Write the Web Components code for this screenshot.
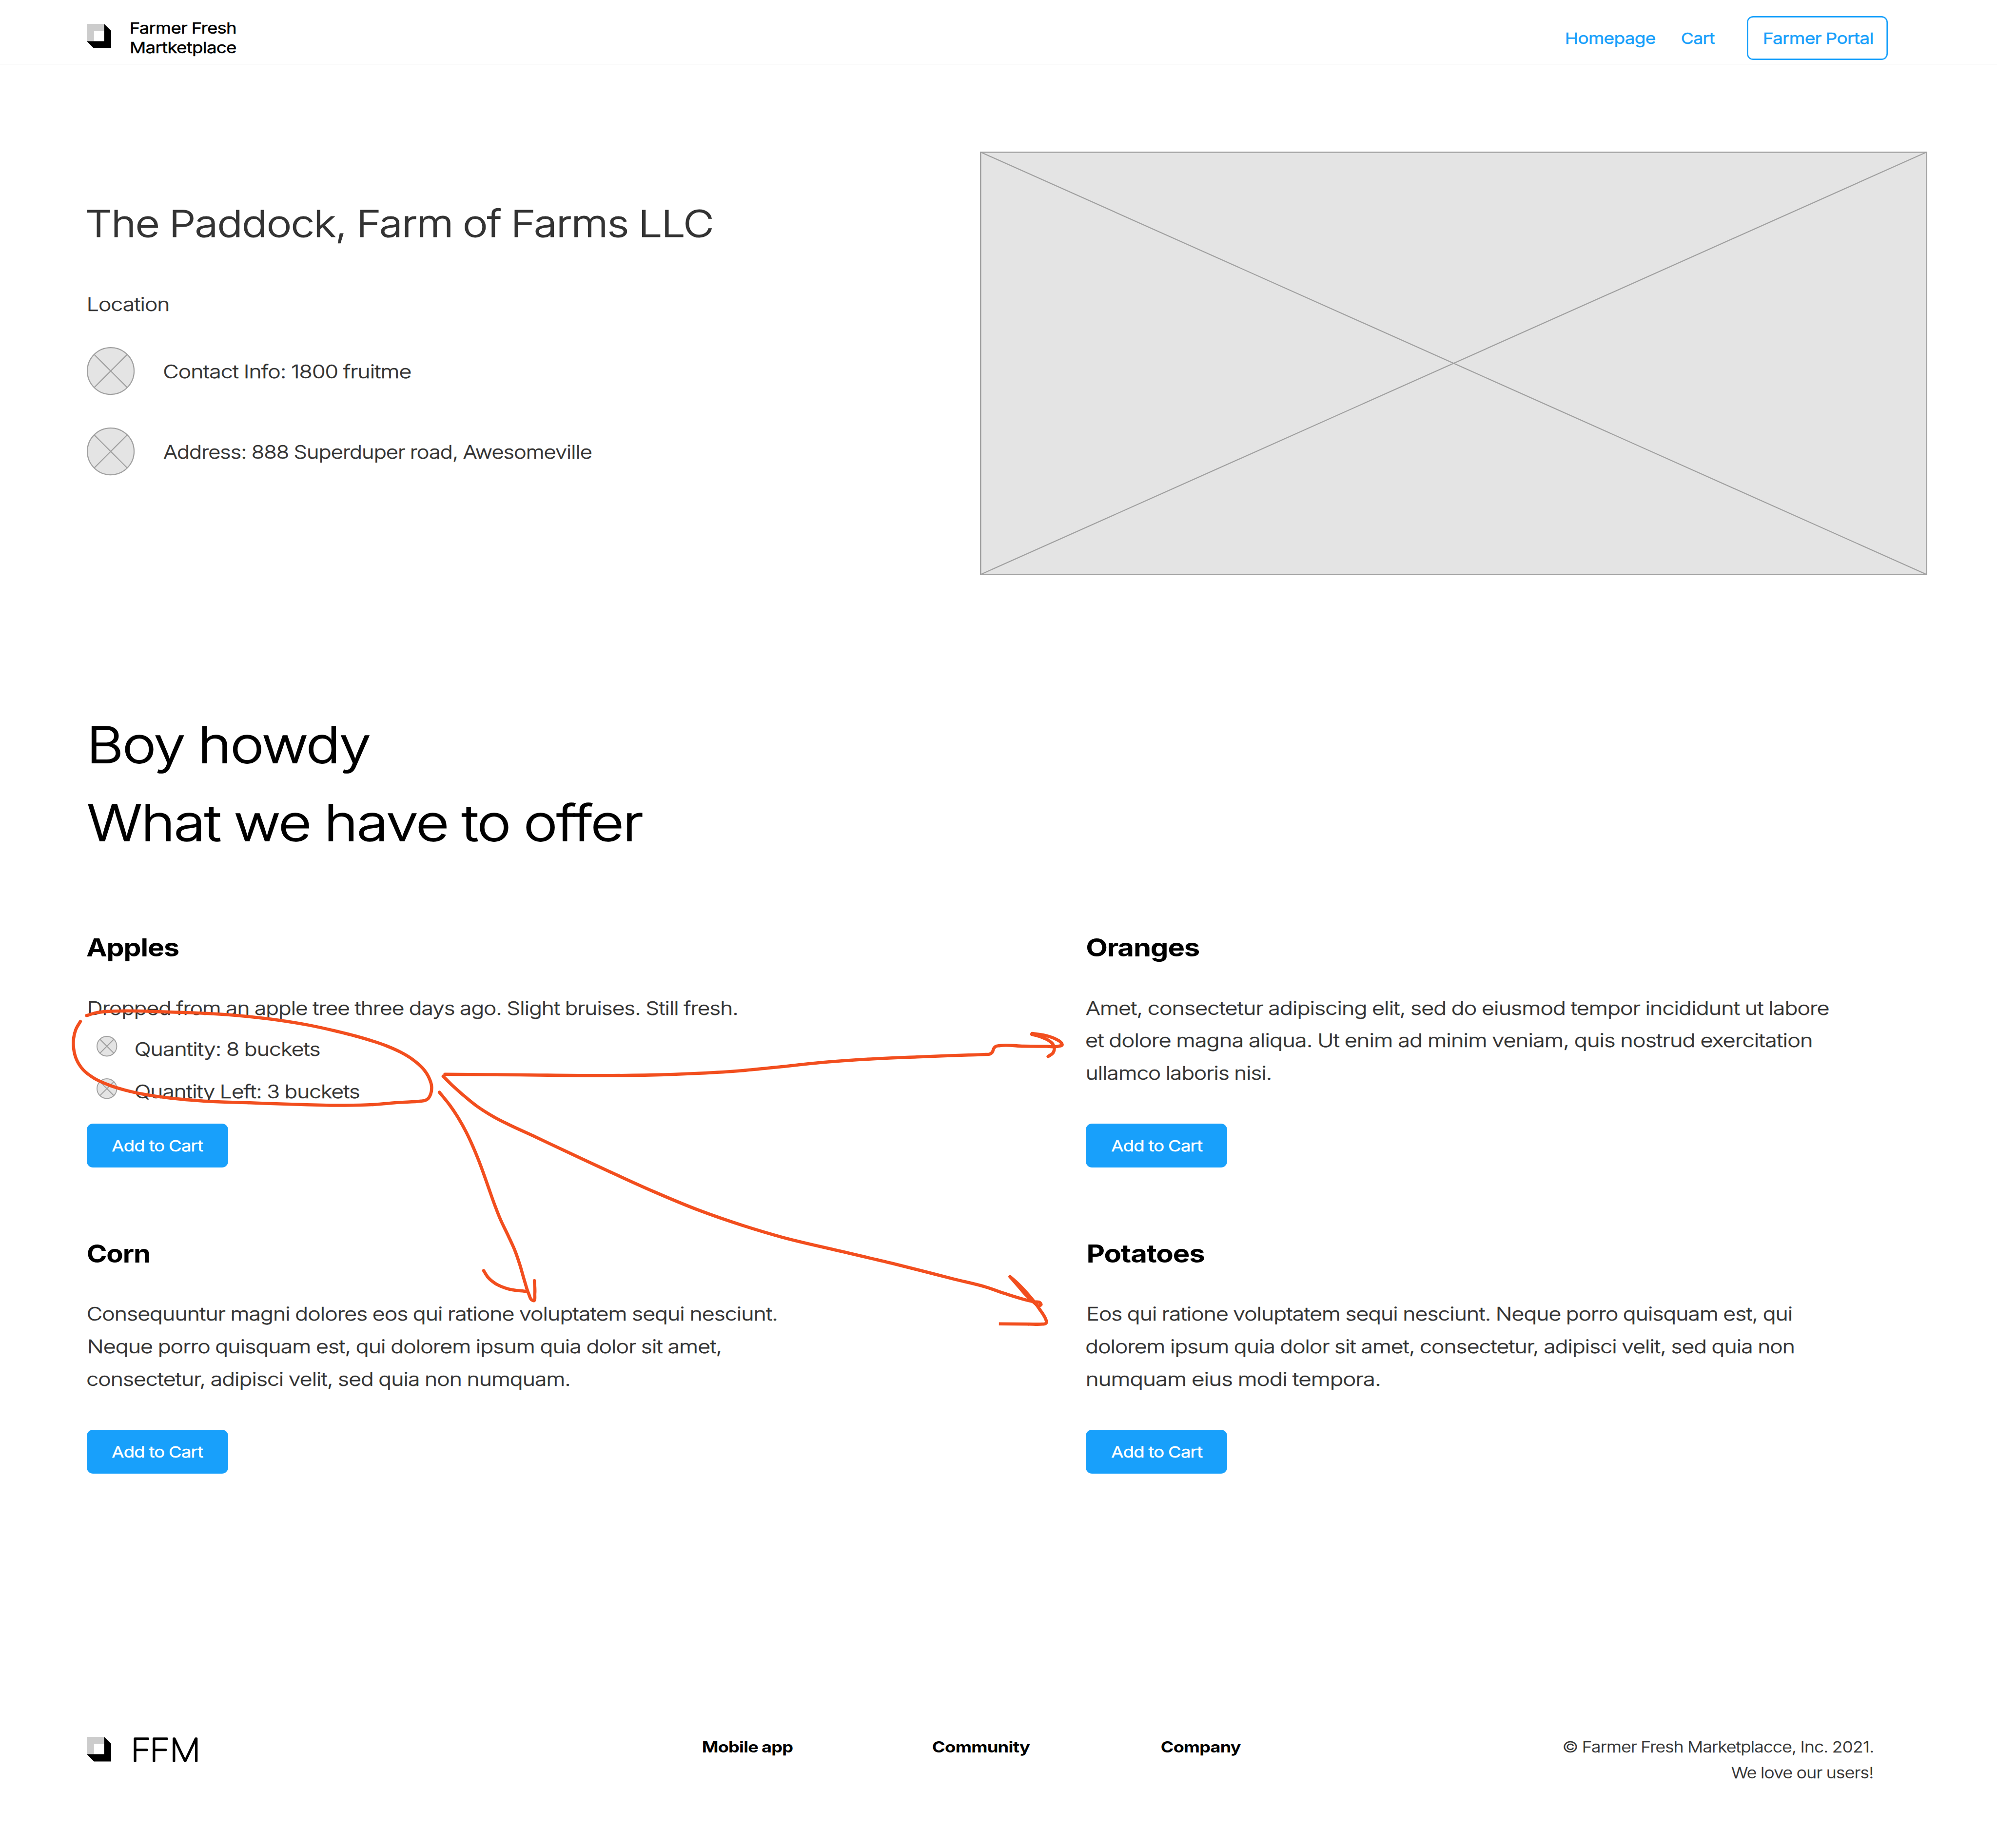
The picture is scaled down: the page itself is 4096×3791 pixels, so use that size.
<!DOCTYPE html>
<html lang="en">
<head>
<meta charset="utf-8">
<title>Farmer Fresh Marketplace</title>
<style>
/* 1rem = 10 design units; the design is 5112 units wide */
html{font-size:calc(100vw / 511.2)}
body{margin:0;background:#fff;font-family:Inter,"Open Sans",sans-serif;color:#333;overflow:hidden;font-weight:300;--ink:.014em}
</style>
</head>
<body>
<farm-page></farm-page>
<script>
const define=(name,html,setup)=>{
  const t=document.createElement('template');t.innerHTML=html;
  customElements.define(name,class extends HTMLElement{
    constructor(){super();this.attachShadow({mode:'open'}).append(t.content.cloneNode(true))}
    connectedCallback(){setup&&setup(this,this.shadowRoot)}
  });
};

define('cube-logo',`<style>:host{display:block;width:6.3rem;height:6.3rem;flex:none}svg{display:block;width:100%;height:100%}</style>
<svg viewBox="0 0 63 63"><path fill="#ccc" d="M0 0H44.4V18.5H18.5V44.3H0Z"/><path d="M44.4 0L63 18.5V63H18.5L0 44.3H44.4Z"/></svg>`);

define('round-mark',`<style>:host{display:block;width:var(--d,12.25rem);height:var(--d,12.25rem);flex:none}svg{display:block;width:100%;height:100%;overflow:visible}</style>
<svg viewBox="0 0 122 122"><g fill="#e4e4e4" stroke="#a0a0a0"><circle cx="61" cy="61"/><path d="M18.6 18.6L103.4 103.4M103.4 18.6L18.6 103.4"/></g></svg>`,
(el,r)=>{const s=el.hasAttribute('small');r.querySelector('g').setAttribute('stroke-width',s?5.6:2.8);
  r.querySelector('circle').setAttribute('r',s?58.2:59.6)});

define('image-box',`<style>:host{display:block;width:242.5rem;height:108.4rem;flex:none}svg{display:block;width:100%;height:100%}</style>
<svg viewBox="0 0 2425 1084"><rect x="1.6" y="1.6" width="2421.8" height="1080.8" fill="#e4e4e4" stroke="#a0a0a0" stroke-width="3.2"/><path d="M1 1L2424 1083M2424 1L1 1083" stroke="#a0a0a0" stroke-width="2.8"/></svg>`);

define('site-header',`<style>
:host{display:flex;align-items:flex-start;box-sizing:border-box;height:16.6rem;padding:0 27.9rem 0 22.2rem;border-bottom:1px solid #fafafa}
cube-logo{margin-top:6.1rem}
.brand{margin:4.63rem 0 0 4.9rem;color:#000;font-size:3.94rem;line-height:5.02rem;font-weight:400}
nav{display:flex;align-items:center;margin:4.13rem 0 0 auto;color:#18a0fb;font-size:3.94rem;line-height:6rem;font-weight:400}
.cart{margin:0 8.2rem 0 6.8rem}
.portal{display:flex;align-items:center;box-sizing:border-box;width:36.1rem;height:11.17rem;padding-left:4.34rem;border-radius:1.6rem;box-shadow:inset 0 0 0 .33rem #18a0fb}
</style>
<cube-logo></cube-logo>
<div class="brand"><fit-text w="269.3">Farmer Fresh</fit-text><fit-text w="269" o=".5">Martketplace</fit-text></div>
<nav><fit-text w="228">Homepage</fit-text><fit-text class="cart" w="85">Cart</fit-text><div class="portal"><fit-text w="279">Farmer Portal</fit-text></div></nav>`);

define('contact-row',`<style>:host{display:flex;align-items:center;gap:7.5rem;height:12.25rem}</style><round-mark></round-mark><slot></slot>`);

define('farm-hero',`<style>
:host{display:flex;align-items:flex-start;justify-content:space-between;box-sizing:border-box;height:164rem;padding:0 17.85rem 0 22.2rem}
.info{padding-top:34.45rem;font-size:4.8rem;line-height:6rem}
h1{margin:0;font-size:9.5rem;line-height:12rem;font-weight:300}
.loc{margin:11.67rem 0 8.18rem}
contact-row+contact-row{margin-top:8.25rem}
image-box{margin-top:22.2rem}
</style>
<div class="info"><h1><fit-text w="1598" o="1.4">The Paddock, Farm of Farms LLC</fit-text></h1>
<div class="loc"><fit-text w="205" o="4">Location</fit-text></div>
<contact-row><fit-text w="632" o=".6">Contact Info: 1800 fruitme</fit-text></contact-row>
<contact-row><fit-text w="1095">Address: 888 Superduper road, Awesomeville</fit-text></contact-row></div>
<image-box></image-box>`);

define('blue-button',`<style>:host{display:flex;align-items:center;justify-content:center;width:36.15rem;height:11.17rem;border-radius:1.6rem;background:#18a0fb;color:#fff;font-size:3.94rem;line-height:6rem;font-weight:400}</style><fit-text w="234" o=".3">Add to Cart</fit-text>`);

define('product-card',`<style>
:host{display:flex;flex-direction:column;height:60.56rem}
.title{color:#000;font-size:6.4rem;line-height:8rem;font-weight:700;--ink:0;margin-bottom:7.46rem}
.body{font-size:4.8rem;line-height:8.35rem}
blue-button{margin-top:auto}
</style><div class="title"><slot name="title"></slot></div><div class="body"><slot></slot></div><blue-button></blue-button>`);

define('stock-row',`<style>:host{display:flex;align-items:flex-start;gap:4.7rem;padding-left:2.5rem;margin-top:3.08rem;height:6.6rem;font-size:4.8rem;line-height:6.6rem}
:host(:last-of-type){margin-top:4.23rem}round-mark{--d:5.3rem}</style><round-mark small></round-mark><slot></slot>`);

define('farm-offer',`<style>
:host{display:block;padding-left:22.2rem}
h2{margin:0 0 17.74rem;color:#000;font-size:12.85rem;line-height:20rem;font-weight:300}
.grid{display:grid;grid-template-columns:255.8rem 1fr;row-gap:17.8rem}
</style>
<h2><fit-text w="711" o="12">Boy howdy</fit-text><fit-text w="1419" o="3">What we have to offer</fit-text></h2>
<div class="grid">
<product-card><fit-text slot="title" w="235">Apples</fit-text><fit-text w="1659" o="5.3">Dropped from an apple tree three days ago. Slight bruises. Still fresh.</fit-text>
<stock-row><fit-text w="471">Quantity: 8 buckets</fit-text></stock-row><stock-row><fit-text w="572.5">Quantity Left: 3 buckets</fit-text></stock-row></product-card>
<product-card><fit-text slot="title" w="287" o="3">Oranges</fit-text><fit-text w="1901" o="1">Amet, consectetur adipiscing elit, sed do eiusmod tempor incididunt ut labore</fit-text><fit-text w="1856" o="1.6">et dolore magna aliqua. Ut enim ad minim veniam, quis nostrud exercitation</fit-text><fit-text w="469" o="4">ullamco laboris nisi.</fit-text></product-card>
<product-card><fit-text slot="title" w="157" o="2.5">Corn</fit-text><fit-text w="1763" o="2.5">Consequuntur magni dolores eos qui ratione voluptatem sequi nesciunt.</fit-text><fit-text w="1617" o="5.3">Neque porro quisquam est, qui dolorem ipsum quia dolor sit amet,</fit-text><fit-text w="1233" o="2">consectetur, adipisci velit, sed quia non numquam.</fit-text></product-card>
<product-card><fit-text slot="title" w="297" o="6">Potatoes</fit-text><fit-text w="1801" o="6">Eos qui ratione voluptatem sequi nesciunt. Neque porro quisquam est, qui</fit-text><fit-text w="1810" o="2">dolorem ipsum quia dolor sit amet, consectetur, adipisci velit, sed quia non</fit-text><fit-text w="748" o="4">numquam eius modi tempora.</fit-text></product-card>
</div>`);

define('site-footer',`<style>
:host{display:flex;align-items:flex-start;margin-top:66.54rem;padding:0 31.65rem 0 22.2rem;font-size:3.94rem;line-height:6.68rem}
cube-logo{margin-top:.9rem}
svg{display:block;width:17rem;height:7rem;margin:.7rem 0 0 5.5rem;overflow:visible}
svg text{font:100 80.5px Inter,sans-serif;stroke:#000;stroke-width:4.2px;stroke-linejoin:round}
.links{display:flex;margin-left:128.93rem;color:#000;font-weight:700;--ink:0}
.copy{margin-left:auto;display:flex;flex-direction:column;align-items:flex-end}
</style>
<cube-logo></cube-logo>
<svg viewBox="0 0 170 70"><text transform="scale(1.1 1)" x="-4.4 39.6 86.2" y="64">FFM</text></svg>
<div class="links"><fit-text w="229.7">Mobile app</fit-text><fit-text style="margin-left:35.87rem" w="249.6">Community</fit-text><fit-text style="margin-left:33.57rem" w="204">Company</fit-text></div>
<div class="copy"><fit-text w="792.5">© Farmer Fresh Marketplacce, Inc. 2021.</fit-text><fit-text style="margin-right:.19rem" w="362">We love our users!</fit-text></div>`);

/* Freehand marker notes drawn over the page; each stroke is a smooth curve through its points */
const strokes=[
 '221.7,2600 246,2593 279.4,2589.3 319,2588.3 425.3,2590.7 531.4,2594.8 624.3,2601.5 710.5,2611.5 790,2624.5 856.4,2639 922.8,2656 989,2677.5 1025,2693.5 1057,2713 1082,2735 1097,2757 1105,2783.3 1102.5,2801 1095,2813.5 1088,2817.5 1078,2819 1022,2822.5 956,2828 883,2830 757,2827.5 640,2823.5 538,2820 425,2810 345,2797 279,2778 240,2760 213,2739 196,2713 188.5,2684 188.5,2658 194,2636 205.8,2615',
 '1139,2750.4 1330,2752 1559,2753.6 1700,2751.5 1789,2748 1900,2741 2000,2731 2100,2720.5 2200,2713 2347,2706 2480,2701 2523,2699.6 2534,2698.5 2540,2694 2544,2684 2549,2679 2560,2677 2620,2678.5 2680,2679 2708,2679 2719,2675 2716,2669 2704,2661 2676,2651 2642,2646',
 '2641,2648 2663,2654 2683,2663 2695,2673 2699,2684 2696,2695 2683,2705',
 '1134.4,2755.4 1159,2780 1186,2804 1222,2833 1265,2860 1300,2878 1367,2909 1444,2945.5 1559,2999 1674,3051 1789,3098.5 1903,3138 2000,3167 2152,3203.5 2282,3234 2400,3264 2443,3275 2523,3295 2573,3312 2626,3328 2647,3333 2663,3336 2665,3340 2660,3343 2646,3334 2626,3315 2606,3292 2585.5,3268.5',
 '2585.5,3268.5 2600,3281 2620,3301 2646,3331 2662,3353 2677,3378 2679,3385 2676,3389 2668,3390 2633,3390',
 '1124.7,2796.4 1151.7,2830 1174.6,2864.5 1193.6,2899 1210,2934 1225,2970 1238,3005 1251,3042 1266,3084 1281,3122 1302,3166 1319,3204 1331,3239 1342,3277 1354,3314 1361,3328 1366,3330 1369,3311.6 1368,3279',
 '1238,3253 1249,3270 1268,3286 1301,3300 1348.6,3306.3'];
const smooth=s=>{const p=s.split(' ').map(q=>q.split(',').map(Number));
  const len=(u,v)=>Math.hypot(v[0]-u[0],v[1]-u[1]);
  const tan=p.map((b,i)=>{const a=p[i-1],c=p[i+1];
    if(!a||!c){const u=a||b,v=a?b:c,l=len(u,v);return[(v[0]-u[0])/l,(v[1]-u[1])/l]}
    const l=len(a,b),m=len(b,c);
    return[0,1].map(j=>((b[j]-a[j])/l*m+(c[j]-b[j])/m*l)/(l+m))});
  let d='M'+p[0];
  for(let i=0;i<p.length-1;i++){const b=p[i],c=p[i+1],m=len(b,c)/3,t=tan[i],w=tan[i+1];
    d+=`C${b[0]+t[0]*m},${b[1]+t[1]*m} ${c[0]-w[0]*m},${c[1]-w[1]*m} ${c}`}
  return d};
define('marker-notes',`<style>:host{position:absolute;inset:0;pointer-events:none}svg{display:block;width:511.2rem;height:473.1rem}</style>
<svg viewBox="0 0 5112 4731"><g fill="none" stroke="#f24e1e" stroke-width="8.2" stroke-linecap="round" stroke-linejoin="round">${strokes.map(s=>`<path d="${smooth(s)}"/>`).join('')}<path d="M2557 3389.3L2634 3390" stroke-linecap="butt"/></g></svg>`);

define('farm-page',`<style>:host{display:block;position:relative;width:511.2rem;height:473.1rem;overflow:hidden}</style>
<site-header></site-header><farm-hero></farm-hero><farm-offer></farm-offer><site-footer></site-footer><marker-notes></marker-notes>`);

/* One line of text whose visible glyphs span exactly w units, starting o units into its box */
const ctx=document.createElement('canvas').getContext('2d');
define('fit-text',`<style>:host{display:block;white-space:nowrap;flex:none}span{display:inline-block;transform-origin:0 50%;vertical-align:top;word-spacing:-.025em;letter-spacing:-.02em;-webkit-text-stroke:var(--ink) currentColor}</style><span><slot></slot></span>`,
(el,r)=>{const unit=parseFloat(getComputedStyle(document.documentElement).fontSize)/10,cs=getComputedStyle(el),w=el.getAttribute('w')*unit,o=(el.getAttribute('o')||0)*unit;
  ctx.font=`${cs.fontWeight} ${cs.fontSize} ${cs.fontFamily}`;
  const span=r.querySelector('span'),m=ctx.measureText(el.textContent.trim());
  const left=-m.actualBoundingBoxLeft,right=m.width-m.actualBoundingBoxRight-.02*parseFloat(cs.fontSize);
  const k=w/(span.getBoundingClientRect().width-left-right);
  el.style.width=w+'px';
  span.style.transform=`translate(${o-left*k}px,${.8*unit}px) scaleX(${k})`});
</script>
</body>
</html>
